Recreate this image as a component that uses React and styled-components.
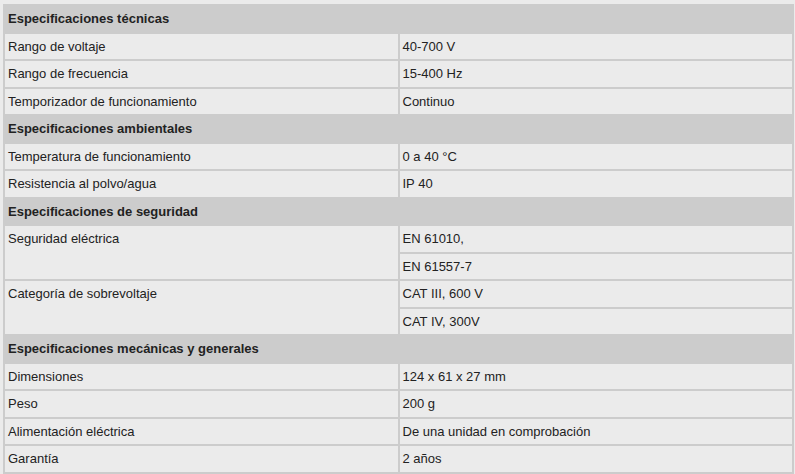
import React from 'react';
import styled, { createGlobalStyle } from 'styled-components';

const Global = createGlobalStyle`
    body {
        margin: 0;
        background: #ebebeb;
        font-family: "Liberation Sans", Arial, sans-serif;
    }
`

const Wrap = styled.div`
    padding: 4px 1px 0 3px;
`

const Table = styled.table`
    width: 100%;
    table-layout: fixed;
    border-collapse: separate;
    border-spacing: 2px;
    background-color: #cccccc;
    font-size: 13px;
    color: #222;
`

const Head = styled.th`
    text-align: left;
    font-weight: bold;
    background-color: #cccccc;
    padding: 5px 3px;
    line-height: 15.5px;
`

const Cell = styled.td`
    background-color: #ebebeb;
    padding: 5px 3px;
    line-height: 15.5px;
    vertical-align: top;
    width: 50%;
`

const sections = [
    {
        title: 'Especificaciones técnicas',
        rows: [
            ['Rango de voltaje', ['40-700 V']],
            ['Rango de frecuencia', ['15-400 Hz']],
            ['Temporizador de funcionamiento', ['Continuo']],
        ],
    },
    {
        title: 'Especificaciones ambientales',
        rows: [
            ['Temperatura de funcionamiento', ['0 a 40 °C']],
            ['Resistencia al polvo/agua', ['IP 40']],
        ],
    },
    {
        title: 'Especificaciones de seguridad',
        rows: [
            ['Seguridad eléctrica', ['EN 61010,', 'EN 61557-7']],
            ['Categoría de sobrevoltaje', ['CAT III, 600 V', 'CAT IV, 300V']],
        ],
    },
    {
        title: 'Especificaciones mecánicas y generales',
        rows: [
            ['Dimensiones', ['124 x 61 x 27 mm']],
            ['Peso', ['200 g']],
            ['Alimentación eléctrica', ['De una unidad en comprobación']],
            ['Garantía', ['2 años']],
        ],
    },
]

export default function App() {
    return (
        <Wrap>
            <Global />
            <Table>
                <tbody>
                    {sections.map(section => (
                        <React.Fragment key={section.title}>
                            <tr>
                                <Head colSpan={2}>{section.title}</Head>
                            </tr>
                            {section.rows.map(([label, values]) =>
                                values.map((value, i) => (
                                    <tr key={label + i}>
                                        {i === 0 && <Cell rowSpan={values.length}>{label}</Cell>}
                                        <Cell>{value}</Cell>
                                    </tr>
                                ))
                            )}
                        </React.Fragment>
                    ))}
                </tbody>
            </Table>
        </Wrap>
    );
}
